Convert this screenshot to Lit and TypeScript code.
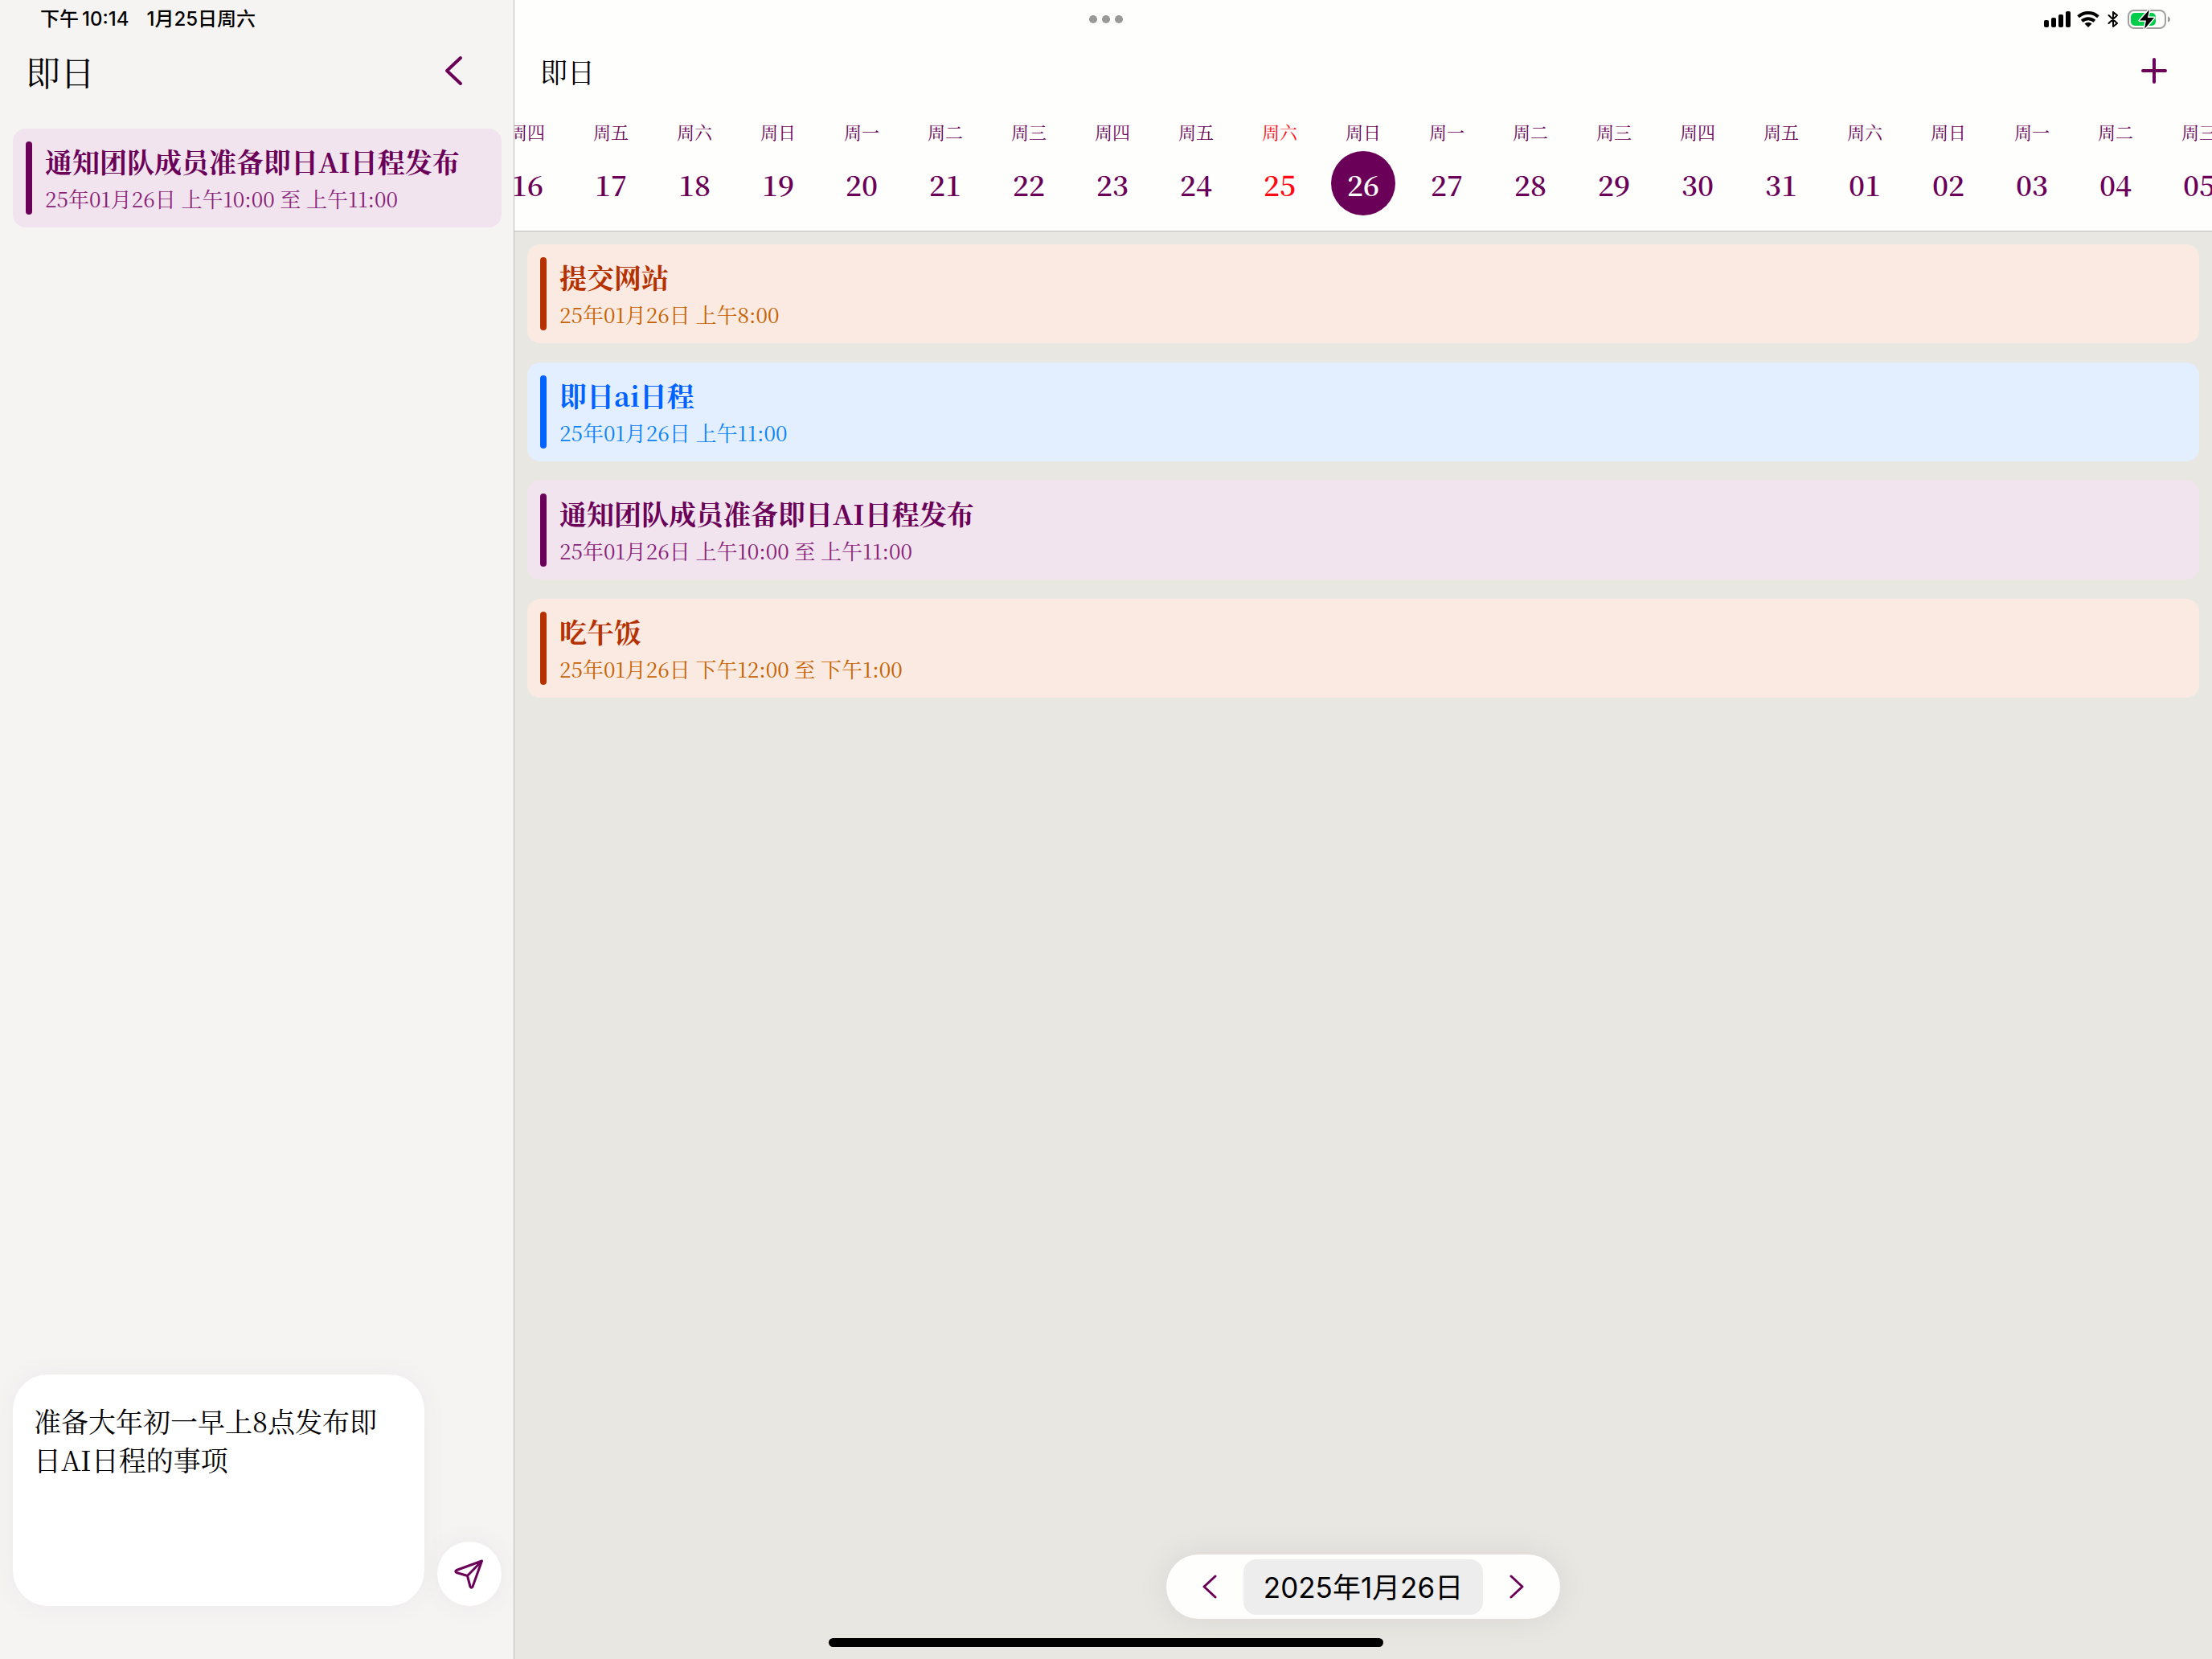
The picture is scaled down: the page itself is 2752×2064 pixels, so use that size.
import { LitElement, html, css, svg } from "lit";
import { customElement, property } from "lit/decorators.js";
import { classMap } from "lit/directives/class-map.js";

type Tone = "plum" | "rust" | "blue";

interface Entry {
  title: string;
  time: string;
  tone: Tone;
}

interface Day {
  week: string;
  date: string;
  today?: boolean;
  selected?: boolean;
}

const WEEK = ["日", "一", "二", "三", "四", "五", "六"];

const DAYS: Day[] = Array.from({ length: 21 }, (_, i) => {
  const d = new Date(2025, 0, 16 + i);
  return {
    week: "周" + WEEK[d.getDay()],
    date: String(d.getDate()).padStart(2, "0"),
    today: i === 9,
    selected: i === 10,
  };
});

const TEAM: Entry = {
  title: "通知团队成员准备即日AI日程发布",
  time: "25年01月26日 上午10:00 至 上午11:00",
  tone: "plum",
};

const ENTRIES: Entry[] = [
  { title: "提交网站", time: "25年01月26日 上午8:00", tone: "rust" },
  { title: "即日ai日程", time: "25年01月26日 上午11:00", tone: "blue" },
  TEAM,
  { title: "吃午饭", time: "25年01月26日 下午12:00 至 下午1:00", tone: "rust" },
];

const chevron = (points: string, w: number, h: number, stroke: number) => html`
  <svg width=${w} height=${h} viewBox="0 0 ${w} ${h}" aria-hidden="true">
    ${svg`<polyline points=${points} fill="none" stroke="currentColor" stroke-width=${stroke}
      stroke-linecap="round" stroke-linejoin="round"></polyline>`}
  </svg>
`;

@customElement("event-card")
export class EventCard extends LitElement {
  @property({ attribute: false }) entry!: Entry;

  static styles = css`
    :host {
      display: block;
    }
    .card {
      display: flex;
      gap: 16px;
      padding: 16px;
      border-radius: 16px;
      background: var(--fill);
    }
    .plum {
      --fill: #f1e4ee;
      --strong: #6a0057;
      --soft: #8a1f78;
    }
    .rust {
      --fill: #fbeae2;
      --strong: #b53200;
      --soft: #c66200;
    }
    .blue {
      --fill: #e3eeff;
      --strong: #0062ff;
      --soft: #0a84f5;
    }
    .bar {
      width: 8px;
      border-radius: 4px;
      background: var(--strong);
    }
    .title {
      margin: 0;
      font-size: 34px;
      font-weight: 700;
      line-height: 50px;
      color: var(--strong);
    }
    .time {
      margin: 0;
      font-size: 26px;
      line-height: 41px;
      color: var(--soft);
    }
  `;

  render() {
    const { title, time, tone } = this.entry;
    return html`
      <article class="card ${tone}">
        <span class="bar"></span>
        <div>
          <h2 class="title">${title}</h2>
          <p class="time">${time}</p>
        </div>
      </article>
    `;
  }
}

@customElement("status-bar")
export class StatusBar extends LitElement {
  static styles = css`
    :host {
      display: grid;
      grid-template-columns: 1fr auto 1fr;
      align-items: center;
      height: 48px;
      padding: 0 50px;
      box-sizing: border-box;
      font-family: "Inter", "Noto Sans CJK SC", sans-serif;
      font-size: 24px;
      font-weight: 500;
      line-height: 28px;
      color: #000;
    }
    .clock {
      display: flex;
      gap: 4px;
    }
    .day {
      margin-left: 18px;
    }
    .dots {
      display: flex;
      gap: 6px;
    }
    .dot {
      width: 10px;
      height: 10px;
      border-radius: 50%;
      background: #999997;
    }
    .icons {
      display: block;
      justify-self: end;
    }
  `;

  render() {
    return html`
      <div class="clock"><span>下午</span><span>10:14</span><span class="day">1月25日周六</span></div>
      <div class="dots"><i class="dot"></i><i class="dot"></i><i class="dot"></i></div>
      <svg class="icons" width="159" height="28" viewBox="0 0 159 28" aria-hidden="true">
        <rect x="0" y="15" width="6" height="9" rx="2"></rect>
        <rect x="9" y="12" width="6" height="12" rx="2"></rect>
        <rect x="18" y="8" width="6" height="16" rx="2"></rect>
        <rect x="27" y="4" width="6" height="20" rx="2"></rect>
        <g fill="none" stroke="#000" stroke-width="4">
          <path d="M42.600 10.700 A18.500 18.500 0 0 1 67.400 10.700"></path>
          <path d="M47.200 16.200 A11.500 11.500 0 0 1 62.800 16.200"></path>
        </g>
        <path d="M50.500 19.600 A6.500 6.500 0 0 1 59.500 19.600 L55 24 Z"></path>
        <path d="M80.500 9 L91 19 L86 23 V5 L91 9 L80.500 19" fill="none" stroke="#000"
          stroke-width="2" stroke-linejoin="round" stroke-linecap="round"></path>
        <rect x="105" y="3" width="46" height="22" rx="7" fill="none" stroke="#a0a0a0" stroke-width="2"></rect>
        <path d="M154 10.500 Q157 11.500 157 14 Q157 16.500 154 17.500 Z" fill="#a0a0a0"></path>
        <rect x="108" y="6" width="31" height="16" rx="5" fill="#05cd4c"></rect>
        <path d="M131 2 L119 15.500 H127 L125 26 L137 12 H129 Z" stroke="#fefefe" stroke-width="3" paint-order="stroke"
          stroke-linejoin="round"></path>
      </svg>
    `;
  }
}

@customElement("app-root")
export class AppRoot extends LitElement {
  static styles = css`
    :host {
      --plum: #6a0057;
      display: grid;
      grid-template-columns: 640px minmax(0, 1fr);
      position: relative;
      min-height: 100vh;
      color: #000;
      font-family: "Noto Serif CJK SC", "Noto Serif SC", "Source Han Serif SC", "Liberation Serif",
        "Noto Sans CJK SC", serif;
    }
    * {
      box-sizing: border-box;
    }
    button {
      display: flex;
      align-items: center;
      justify-content: center;
      padding: 0;
      border: 0;
      background: none;
      color: var(--plum);
      font: inherit;
    }
    svg {
      display: block;
    }
    .status {
      position: absolute;
      inset: 0 0 auto 0;
    }
    .home {
      position: absolute;
      left: 50%;
      bottom: 15px;
      width: 690px;
      height: 11px;
      margin-left: -345px;
      border-radius: 6px;
      background: #000;
    }
    .side {
      display: flex;
      flex-direction: column;
      padding: 48px 15px 66px 16px;
      border-right: 1px solid #bdbdbd;
      background: #f5f4f3;
    }
    .bar {
      display: flex;
      align-items: center;
      justify-content: space-between;
      height: 80px;
    }
    .bar h1 {
      margin: 0;
      font-weight: 400;
    }
    .side .bar {
      padding: 0 14px 0 16px;
      margin-bottom: 32px;
    }
    .side h1 {
      font-size: 43px;
    }
    .tool {
      width: 92px;
      height: 80px;
    }
    .composer {
      display: flex;
      align-items: flex-end;
      gap: 16px;
      margin-top: auto;
    }
    .note {
      flex: 1;
      min-width: 0;
      height: 288px;
      padding: 34px 40px 34px 26px;
      border: 0;
      border-radius: 44px;
      background: #fff;
      box-shadow: 0 0 32px rgba(104, 0, 79, 0.05);
      color: #000;
      font: inherit;
      font-size: 34px;
      line-height: 48px;
      resize: none;
      outline: 0;
    }
    .send {
      width: 80px;
      height: 80px;
      border-radius: 50%;
      background: #fff;
      box-shadow: 0 0 32px rgba(104, 0, 79, 0.06);
    }
    .main {
      display: flex;
      flex-direction: column;
      position: relative;
      background: #e8e7e2;
    }
    .head {
      padding-top: 48px;
      border-bottom: 1px solid #bfbfbf;
      background: #fefefd;
    }
    .head .bar {
      padding: 0 26px 0 32px;
    }
    .head h1 {
      font-size: 34px;
    }
    .days {
      display: flex;
      justify-content: center;
      overflow: hidden;
      padding: 20px 0 19px;
    }
    .day {
      flex: none;
      flex-direction: column;
      gap: 8px;
      width: 104px;
    }
    .week {
      font-size: 22px;
      line-height: 32px;
    }
    .num {
      width: 80px;
      height: 80px;
      border-radius: 50%;
      font-size: 35px;
      font-weight: 600;
      line-height: 82px;
    }
    .today {
      color: #ff0a14;
    }
    .selected .num {
      background: var(--plum);
      color: #fff;
    }
    .list {
      display: flex;
      flex-direction: column;
      gap: 24px;
      padding: 16px;
    }
    .pager {
      display: flex;
      align-items: center;
      position: absolute;
      left: 50%;
      bottom: 50px;
      width: 490px;
      height: 80px;
      margin-left: -245px;
      padding: 0 12px;
      border-radius: 40px;
      background: #fefefd;
      box-shadow: 0 0 40px rgba(60, 0, 45, 0.08);
    }
    .step {
      flex: 1;
      height: 80px;
    }
    .date {
      width: 298px;
      height: 69px;
      padding-bottom: 4px;
      border-radius: 16px;
      background: #ededed;
      color: #000;
      font-family: "Inter", "Noto Sans CJK SC", sans-serif;
      font-size: 35px;
    }
  `;

  render() {
    return html`
      <aside class="side">
        <header class="bar">
          <h1>即日</h1>
          <button class="tool" aria-label="收起">${chevron("20,3 3,19 20,35", 23, 38, 4)}</button>
        </header>
        <event-card .entry=${TEAM}></event-card>
        <form class="composer" @submit=${(e: Event) => e.preventDefault()}>
          <textarea class="note" aria-label="日程" spellcheck="false"
            .value=${"准备大年初一早上8点发布即日AI日程的事项"}></textarea>
          <button class="send" aria-label="发送">
            <svg width="40" height="40" viewBox="0 0 40 40" aria-hidden="true">
              <path d="M35.500 4 L4 15.500 Q1.500 17 4 18.500 L17.500 22.500 L21 36 Q22.500 38.500 24 36 Z M35.500 4 L17.500 22.500"
                fill="none" stroke="currentColor" stroke-width="3" stroke-linejoin="round" stroke-linecap="round"></path>
            </svg>
          </button>
        </form>
      </aside>
      <main class="main">
        <header class="head">
          <div class="bar">
            <h1>即日</h1>
            <button class="tool" aria-label="新建">
              <svg width="32" height="32" viewBox="0 0 32 32" aria-hidden="true">
                <path d="M16 2 V30 M2 16 H30" stroke="currentColor" stroke-width="4" stroke-linecap="round"></path>
              </svg>
            </button>
          </div>
          <nav class="days">
            ${DAYS.map(
              (d) => html`
                <button class=${classMap({ day: true, today: !!d.today, selected: !!d.selected })}>
                  <span class="week">${d.week}</span>
                  <span class="num">${d.date}</span>
                </button>
              `
            )}
          </nav>
        </header>
        <section class="list">
          ${ENTRIES.map((e) => html`<event-card .entry=${e}></event-card>`)}
        </section>
        <div class="pager">
          <button class="step" aria-label="前一天">${chevron("16,2 2,15 16,28", 18, 30, 3)}</button>
          <button class="date">2025年1月26日</button>
          <button class="step" aria-label="后一天">${chevron("2,2 16,15 2,28", 18, 30, 3)}</button>
        </div>
      </main>
      <status-bar class="status"></status-bar>
      <div class="home"></div>
    `;
  }
}
